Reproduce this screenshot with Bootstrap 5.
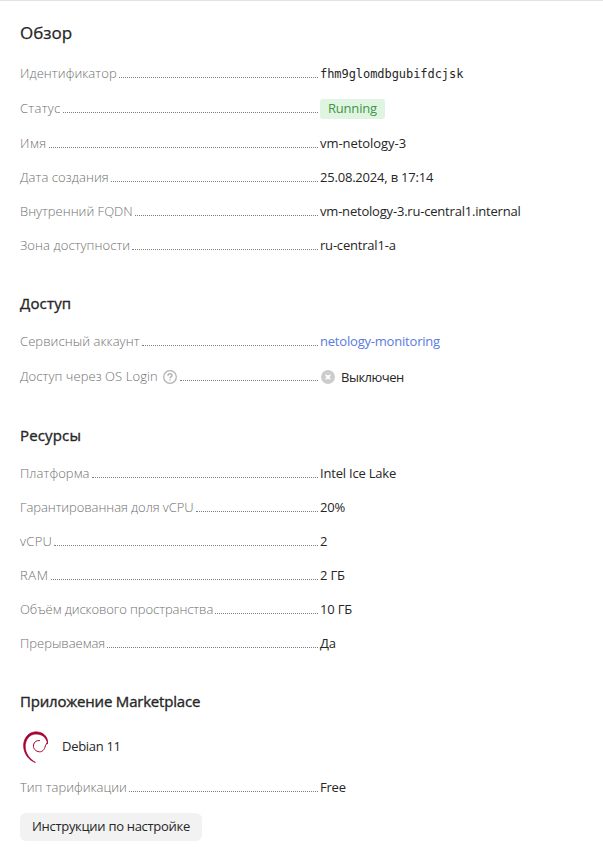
<!DOCTYPE html>
<html lang="ru">
<head>
<meta charset="utf-8">
<meta name="viewport" content="width=device-width, initial-scale=1">
<title>Обзор</title>
<link href="https://cdn.jsdelivr.net/npm/bootstrap@5.3.0/dist/css/bootstrap.min.css" rel="stylesheet">
<style>
body{font-family:"Open Sans","Noto Sans",sans-serif;font-size:13px;line-height:18px;color:#262626;border-top:1px solid #e3e3e3;height:857px;overflow:hidden}
.page-pad{padding:20px 20px 0}
.page-title{font-size:17px;line-height:24px;font-weight:400;margin:0 0 20px;-webkit-text-stroke:.25px #262626}
.sect-title{font-size:15px;line-height:20px;font-weight:400;margin:0 0 20px;-webkit-text-stroke:.35px #262626;letter-spacing:.15px}
.sect-title.long{letter-spacing:-.2px}
.sect{margin-bottom:38px}
.prop{display:flex;height:18px;margin-bottom:16px;line-height:16px}
.prop:last-child{margin-bottom:0}
.prop.tall{height:20px}
.prop.tall dt{margin-top:1px}
.prop dt{flex:0 0 298px;margin-right:2px;display:flex;font-weight:300;color:#707070;white-space:nowrap;letter-spacing:.08px}
.prop dt::after{content:"";flex:1;height:13px;margin-left:2px;border-bottom:1px dotted #7f7f7f}
.prop dd{margin:0;white-space:nowrap;letter-spacing:-.2px}
.prop dt.tight{letter-spacing:-.07px}
.prop dt.even{letter-spacing:0}
.prop dt.loose{letter-spacing:.3px}
.prop dt.wide{letter-spacing:.6px}
.prop dd.even{letter-spacing:-.05px}
.prop dd.mono-id{font-family:"DejaVu Sans Mono",monospace;font-size:12px;line-height:18px;letter-spacing:-.06px}
.status-tag{background:#dff5e1;color:#3f9446;border-radius:3px;padding:0 8px;height:20px;line-height:18px;display:block;letter-spacing:-.2px}
.app-link{color:#5a7ae0;text-decoration:none}
.off-text{margin-left:5px;line-height:18px;letter-spacing:-.5px}
.app-logo{margin-right:10px}
.app-name{letter-spacing:-.3px;line-height:16px;padding-bottom:2px}
.btn.setup-btn{background:#f2f2f2;color:#262626;font-size:13px;line-height:26px;height:28px;padding:0 12px 2px;border:0;border-radius:6px;letter-spacing:-.3px}
</style>
</head>
<body>
<main class="page-pad">
  <section class="sect">
    <h1 class="page-title">Обзор</h1>
    <dl class="mb-0">
      <div class="prop"><dt>Идентификатор</dt><dd class="mono-id">fhm9glomdbgubifdcjsk</dd></div>
      <div class="prop tall"><dt class="loose">Статус</dt><dd><span class="status-tag">Running</span></dd></div>
      <div class="prop"><dt class="wide">Имя</dt><dd class="even">vm-netology-3</dd></div>
      <div class="prop"><dt>Дата создания</dt><dd>25.08.2024, в 17:14</dd></div>
      <div class="prop"><dt class="even">Внутренний FQDN</dt><dd>vm-netology-3.ru-central1.internal</dd></div>
      <div class="prop"><dt>Зона доступности</dt><dd>ru-central1-a</dd></div>
    </dl>
  </section>
  <section class="sect">
    <h2 class="sect-title">Доступ</h2>
    <dl class="mb-0">
      <div class="prop"><dt>Сервисный аккаунт</dt><dd><a class="app-link" href="#">netology-monitoring</a></dd></div>
      <div class="prop tall"><dt>Доступ через OS Login<svg class="ms-1" width="16" height="18" viewBox="0 0 16 18" fill="none" stroke="#b3b3b3"><circle cx="8" cy="9" r="6.300" stroke-width="1.300"/><path d="M6 7.700c0-2.500 4-2.500 4-.2 0 1.300-2 1.300-2 2.700M8 11.200v1.300" stroke-width="1.500"/></svg></dt>
      <dd class="d-flex align-items-center"><svg width="16" height="18" viewBox="0 0 16 18"><circle cx="8" cy="9" r="7" fill="#ccc"/><path d="M5.800 6.800l4.400 4.400M10.200 6.800l-4.400 4.400" stroke="#fff" stroke-width="1.800"/></svg><span class="off-text">Выключен</span></dd></div>
    </dl>
  </section>
  <section class="sect">
    <h2 class="sect-title">Ресурсы</h2>
    <dl class="mb-0">
      <div class="prop"><dt>Платформа</dt><dd>Intel Ice Lake</dd></div>
      <div class="prop"><dt class="tight">Гарантированная доля vCPU</dt><dd>20%</dd></div>
      <div class="prop"><dt class="loose">vCPU</dt><dd>2</dd></div>
      <div class="prop"><dt class="wide">RAM</dt><dd>2 ГБ</dd></div>
      <div class="prop"><dt class="tight">Объём дискового пространства</dt><dd>10 ГБ</dd></div>
      <div class="prop"><dt class="even">Прерываемая</dt><dd>Да</dd></div>
    </dl>
  </section>
  <section>
    <h2 class="sect-title long">Приложение Marketplace</h2>
    <div class="d-flex align-items-center mb-3">
      <svg class="app-logo" width="32" height="32" viewBox="0 0 32 32" fill="none" stroke="#a80030" stroke-linecap="round"><path d="M27.500 12.500C28.500 8 25 1 16 .8C8 1 3 8 3.700 16C4.200 23 9 29.500 15.500 31.500C9 27.500 5.500 22 5.200 16C5 9 9.500 3 16 3C22.500 3 26.300 6.500 27.500 12.500Z" fill="#a80030" stroke-width=".7"/><path d="M27.300 11.500L25.500 14.500C24.500 19 22 21 19.500 20.800C15.500 20.500 13 17.500 13.500 14C14 11 16.500 9.200 19.500 9.500" stroke-width="1"/></svg>
      <span class="app-name">Debian 11</span>
    </div>
    <dl class="mb-0"><div class="prop"><dt class="even">Тип тарификации</dt><dd>Free</dd></div></dl>
    <button type="button" class="btn setup-btn mt-3">Инструкции по настройке</button>
  </section>
</main>
<script src="https://cdn.jsdelivr.net/npm/bootstrap@5.3.0/dist/js/bootstrap.bundle.min.js"></script>
</body>
</html>
